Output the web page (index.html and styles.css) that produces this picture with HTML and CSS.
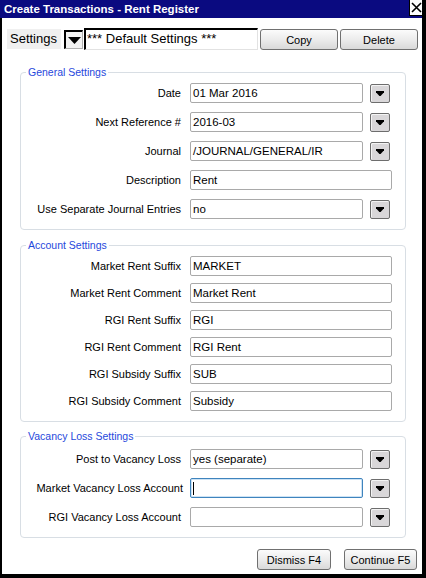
FILE: index.html
```html
<!DOCTYPE html>
<html>
<head>
<meta charset="utf-8">
<link rel="stylesheet" href="styles.css">
</head>
<body>
<div class="window">
  <div class="titlebar">
    <span class="title">Create Transactions - Rent Register</span>
    <span class="close"><svg width="11" height="11" viewBox="0 0 11 11"><path d="M1 1L10 10M10 1L1 10" stroke="#000" stroke-width="1.6" fill="none"/></svg></span>
  </div>
  <div class="main">
    <div class="settings-row">
      <div class="settings-label">Settings</div>
      <div class="settings-drop"><svg width="13" height="7" viewBox="0 0 13 7"><path d="M0 0H13L6.5 7Z" fill="#000"/></svg></div>
      <div class="settings-field">*** Default Settings ***</div>
      <div class="btn top-btn">Copy</div>
      <div class="btn top-btn">Delete</div>
    </div>

    <div class="group general">
      <span class="legend">General Settings</span>
      <div class="row"><span class="label">Date</span><div class="field">01 Mar 2016</div><div class="drop"><svg width="8" height="5" viewBox="0 0 8 5"><path d="M0 0H8V1.2L4.6 5H3.4L0 1.2Z" fill="#000"/></svg></div></div>
      <div class="row"><span class="label">Next Reference #</span><div class="field">2016-03</div><div class="drop"><svg width="8" height="5" viewBox="0 0 8 5"><path d="M0 0H8V1.2L4.6 5H3.4L0 1.2Z" fill="#000"/></svg></div></div>
      <div class="row"><span class="label">Journal</span><div class="field">/JOURNAL/GENERAL/IR</div><div class="drop"><svg width="8" height="5" viewBox="0 0 8 5"><path d="M0 0H8V1.2L4.6 5H3.4L0 1.2Z" fill="#000"/></svg></div></div>
      <div class="row"><span class="label">Description</span><div class="field wide">Rent</div></div>
      <div class="row"><span class="label">Use Separate Journal Entries</span><div class="field">no</div><div class="drop"><svg width="8" height="5" viewBox="0 0 8 5"><path d="M0 0H8V1.2L4.6 5H3.4L0 1.2Z" fill="#000"/></svg></div></div>
    </div>

    <div class="group account">
      <span class="legend">Account Settings</span>
      <div class="row"><span class="label">Market Rent Suffix</span><div class="field wide">MARKET</div></div>
      <div class="row"><span class="label">Market Rent Comment</span><div class="field wide">Market Rent</div></div>
      <div class="row"><span class="label">RGI Rent Suffix</span><div class="field wide">RGI</div></div>
      <div class="row"><span class="label">RGI Rent Comment</span><div class="field wide">RGI Rent</div></div>
      <div class="row"><span class="label">RGI Subsidy Suffix</span><div class="field wide">SUB</div></div>
      <div class="row"><span class="label">RGI Subsidy Comment</span><div class="field wide">Subsidy</div></div>
    </div>

    <div class="group vacancy">
      <span class="legend">Vacancy Loss Settings</span>
      <div class="row"><span class="label">Post to Vacancy Loss</span><div class="field">yes (separate)</div><div class="drop"><svg width="8" height="5" viewBox="0 0 8 5"><path d="M0 0H8V1.2L4.6 5H3.4L0 1.2Z" fill="#000"/></svg></div></div>
      <div class="row"><span class="label shift">Market Vacancy Loss Account</span><div class="field focused"><span class="caret"></span></div><div class="drop"><svg width="8" height="5" viewBox="0 0 8 5"><path d="M0 0H8V1.2L4.6 5H3.4L0 1.2Z" fill="#000"/></svg></div></div>
      <div class="row"><span class="label">RGI Vacancy Loss Account</span><div class="field"></div><div class="drop"><svg width="8" height="5" viewBox="0 0 8 5"><path d="M0 0H8V1.2L4.6 5H3.4L0 1.2Z" fill="#000"/></svg></div></div>
    </div>

    <div class="footer">
      <div class="btn dismiss">Dismiss F4</div>
      <div class="btn continue">Continue F5</div>
    </div>
  </div>
</div>
</body>
</html>
```

FILE: styles.css
```css
* { box-sizing: border-box; }
html, body { margin: 0; padding: 0; }
body {
  width: 426px;
  height: 578px;
  overflow: hidden;
  background: #000;
  font-family: "Liberation Sans", Arial, sans-serif;
  font-size: 11px;
  color: #000;
}
.window {
  width: 426px;
  height: 578px;
  display: flex;
  flex-direction: column;
  border-right: 4px solid #000;
  background: #fff;
}
.titlebar {
  height: 18px;
  flex-shrink: 0;
  background: #0a0a80;
  display: flex;
  justify-content: space-between;
  align-items: flex-start;
}
.title {
  color: #fff;
  font-weight: bold;
  font-size: 11.5px;
  line-height: 18px;
  padding-left: 4px;
  white-space: nowrap;
}
.close {
  width: 13px;
  height: 16px;
  background: #fff;
  border-left: 1px solid #000;
  border-bottom: 1px solid #000;
  display: flex;
  align-items: center;
  justify-content: center;
}
.main {
  flex: 1;
  border-left: 2px solid #000;
  border-bottom: 4px solid #000;
  display: flex;
  flex-direction: column;
  padding-top: 10px;
}
.settings-row {
  display: flex;
  align-items: flex-start;
  height: 22px;
  margin-left: 5px;
}
.settings-label {
  width: 54px;
  height: 20px;
  margin-top: 1px;
  background: #f0f0f0;
  font-size: 13px;
  line-height: 20px;
  padding-left: 3px;
}
.settings-drop {
  width: 19px;
  height: 19px;
  margin-left: 3px;
  margin-top: 2px;
  background: #f2f2f2;
  border-top: 2px solid #000;
  border-left: 2px solid #000;
  border-right: 1px solid #b0b0b0;
  border-bottom: 1px solid #b0b0b0;
  display: flex;
  align-items: center;
  justify-content: center;
}
.settings-field {
  width: 174px;
  height: 22px;
  margin-left: 1px;
  border-top: 2px solid #000;
  border-left: 2px solid #000;
  border-right: 1px solid #e2e2e2;
  border-bottom: 1px solid #e2e2e2;
  font-size: 13px;
  line-height: 18px;
  padding-left: 1px;
  white-space: nowrap;
}
.btn {
  height: 21px;
  border: 1px solid #707070;
  border-radius: 3px;
  background: linear-gradient(#fbfbfb, #ececec 50%, #d9d9d9);
  display: flex;
  align-items: center;
  justify-content: center;
  font-size: 11px;
  white-space: nowrap;
}
.top-btn {
  width: 78px;
  margin-left: 2px;
  margin-top: 1px;
}
.group {
  position: relative;
  margin: 22px 16px 0 18px;
  border: 1px solid #d8dee4;
  border-radius: 4px;
  padding: 10px 0;
  display: flex;
  flex-direction: column;
  gap: 9px;
}
.group.account {
  margin-top: 15px;
  gap: 7px;
}
.group.vacancy {
  margin-top: 14px;
  padding-top: 12px;
}
.legend {
  position: absolute;
  top: -7px;
  left: 5px;
  padding: 0 2px;
  background: #fff;
  color: #1f48dc;
  font-size: 10.5px;
  line-height: 13px;
}
.row {
  display: flex;
  align-items: center;
  height: 20px;
}
.label {
  width: 160px;
  margin-right: 9px;
  text-align: right;
  white-space: nowrap;
}
.label.shift {
  margin-right: 7px;
  width: 162px;
}
.field {
  width: 173px;
  height: 20px;
  border: 1px solid #a9a9a9;
  border-radius: 2px;
  padding-left: 2px;
  font-size: 11.5px;
  line-height: 18px;
  white-space: nowrap;
  overflow: hidden;
  display: flex;
  align-items: center;
}
.field.wide { width: 202px; }
.field.focused {
  border-color: #3f84bd;
  box-shadow: inset 0 0 0 1px #cde3f5;
}
.caret {
  display: inline-block;
  width: 1px;
  height: 13px;
  background: #000;
}
.drop {
  width: 20px;
  height: 19px;
  margin-left: 7px;
  border: 1px solid #6d6d6d;
  border-radius: 2px;
  background: #d9d7d9;
  box-shadow: inset 1px 1px 0 #f4f4f4;
  display: flex;
  align-items: center;
  justify-content: center;
}
.footer {
  display: flex;
  justify-content: flex-end;
  gap: 13px;
  margin-top: 11px;
  padding-right: 5px;
}
.dismiss { width: 74px; }
.continue { width: 73px; }
```
